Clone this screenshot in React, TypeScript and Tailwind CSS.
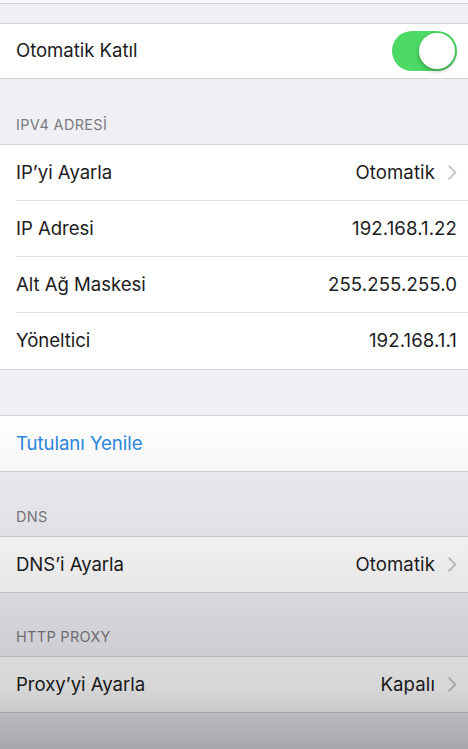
import type { ReactNode } from "react";

const font = { fontFamily: "Inter, 'Noto Sans', 'Liberation Sans', sans-serif" };

function Chevron() {
  return (
    <svg width="9" height="15" viewBox="0 0 9 15" className="ml-[13px]">
      <path d="M1.2 1.2 L7.4 7.5 L1.2 13.8" fill="none" stroke="#c7c7cc" strokeWidth="2" strokeLinecap="round" strokeLinejoin="round" />
    </svg>
  );
}

function Row({
  label,
  value,
  chevron,
  last,
  blue,
  right,
  h = "h-[56px]",
}: {
  label: string;
  value?: string;
  chevron?: boolean;
  last?: boolean;
  blue?: boolean;
  right?: ReactNode;
  h?: string;
}) {
  return (
    <div className="bg-white">
      <div
        className={`ml-4 pr-[11px] flex items-center justify-between ${h} ${
          last ? "" : "border-b border-[#dcdce0]"
        }`}
      >
        <span className={`text-[18.6px] tracking-[-0.05px] ${blue ? "text-[#2b88df]" : "text-[#1c1c1e]"}`}>
          {label}
        </span>
        {right ?? (
          <span className="flex items-center text-[18.6px] tracking-[0.1px] text-[#1c1c1e]">
            {value}
            {chevron && <Chevron />}
          </span>
        )}
      </div>
    </div>
  );
}

function Group({ children }: { children: ReactNode }) {
  return <div className="border-y border-[#d4d4d8]">{children}</div>;
}

function Header({ title, h }: { title?: string; h: string }) {
  return (
    <div className={`${h} flex items-end px-4 pb-[8px]`}>
      {title && <span className="text-[14.5px] text-[#7b7b80] tracking-[0.3px]">{title}</span>}
    </div>
  );
}

function Toggle() {
  return (
    <div className="w-[65px] h-[40px] rounded-full bg-[#4cd964] relative">
      <div className="absolute right-[2px] top-[2px] w-[36px] h-[36px] rounded-full bg-white shadow-[0_2px_4px_rgba(0,0,0,0.3)]" />
    </div>
  );
}

export default function App() {
  return (
    <div className="relative w-[468px] h-[749px] overflow-hidden bg-[#efeff4]" style={font}>
      <div className="h-[4px] bg-[#f7f7f9] border-b border-[#d4d4d8]" />
      <div className="h-[19px]" />
      <Group>
        <Row label="Otomatik Katıl" last h="h-[54px]" right={<Toggle />} />
      </Group>
      <Header title="IPV4 ADRESİ" h="h-[65px]" />
      <Group>
        <Row label="IP’yi Ayarla" value="Otomatik" chevron />
        <Row label="IP Adresi" value="192.168.1.22" />
        <Row label="Alt Ağ Maskesi" value="255.255.255.0" />
        <Row label="Yöneltici" value="192.168.1.1" last />
      </Group>
      <Header h="h-[45px]" />
      <Group>
        <Row label="Tutulanı Yenile" blue last h="h-[55px]" />
      </Group>
      <Header title="DNS" h="h-[64px]" />
      <Group>
        <Row label="DNS’i Ayarla" value="Otomatik" chevron last h="h-[55px]" />
      </Group>
      <Header title="HTTP PROXY" h="h-[63px]" />
      <Group>
        <Row label="Proxy’yi Ayarla" value="Kapalı" chevron last h="h-[55px]" />
      </Group>
      <div className="pointer-events-none absolute inset-0 bg-[linear-gradient(to_bottom,transparent_54%,rgba(0,0,0,0.07)_74%,rgba(0,0,0,0.16)_92%,rgba(0,0,0,0.3)_100%)]" />
    </div>
  );
}
